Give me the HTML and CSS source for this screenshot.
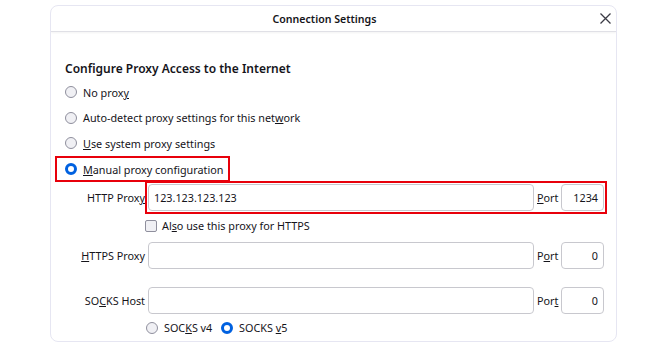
FILE: index.html
```html
<!DOCTYPE html>
<html lang="en">

<head>
    <meta charset="UTF-8">
    <title>Connection Settings</title>
    <link rel="stylesheet" href="styles.css">
</head>

<body>
    <div class="dialog">
        <div class="dialog-header">
            <span class="dialog-title">Connection Settings</span>
            <span class="close-btn">
                <svg width="11" height="11" viewBox="0 0 11 11">
                    <path d="M0.5 0.5 L10.5 10.5 M10.5 0.5 L0.5 10.5" stroke="#3b3b45" stroke-width="1.3" fill="none" />
                </svg>
            </span>
        </div>
        <div class="dialog-body">
            <h2>Configure Proxy Access to the Internet</h2>
            <div class="radio-row"><span class="radio"></span><span>No prox<u>y</u></span></div>
            <div class="radio-row"><span class="radio"></span><span>Auto-detect proxy settings for this net<u>w</u>ork</span></div>
            <div class="radio-row"><span class="radio"></span><span><u>U</u>se system proxy settings</span></div>
            <div class="radio-row highlight-row"><span class="radio checked"></span><span><u>M</u>anual proxy configuration</span></div>

            <div class="proxy-row first">
                <label class="proxy-label">HTTP Prox<u>y</u></label>
                <div class="proxy-fields highlight">
                    <div class="text-field host">123.123.123.123</div>
                    <span class="port-label"><u>P</u>ort</span>
                    <div class="text-field port">1234</div>
                </div>
            </div>
            <div class="check-row"><span class="checkbox"></span><span>Al<u>s</u>o use this proxy for HTTPS</span></div>

            <div class="proxy-row">
                <label class="proxy-label"><u>H</u>TTPS Proxy</label>
                <div class="proxy-fields">
                    <div class="text-field host"></div>
                    <span class="port-label">P<u>o</u>rt</span>
                    <div class="text-field port">0</div>
                </div>
            </div>

            <div class="proxy-row socks">
                <label class="proxy-label">SO<u>C</u>KS Host</label>
                <div class="proxy-fields">
                    <div class="text-field host"></div>
                    <span class="port-label">Por<u>t</u></span>
                    <div class="text-field port">0</div>
                </div>
            </div>
            <div class="socks-row">
                <span class="radio-row inline"><span class="radio"></span><span>SOC<u>K</u>S v4</span></span>
                <span class="radio-row inline"><span class="radio checked"></span><span>SOCKS <u>v</u>5</span></span>
            </div>
        </div>
    </div>
</body>

</html>
```

FILE: styles.css
```css
body {
    margin: 0;
    background-color: #fff;
    font-family: "Noto Sans", "Open Sans", sans-serif;
    font-size: 10.8px;
    color: #15141a;
}

.dialog {
    box-sizing: border-box;
    width: 567px;
    height: 337px;
    margin: 5px 0 0 50px;
    border: 1px solid #e6e6f2;
    border-radius: 8px;
    overflow: hidden;
}

.dialog-header {
    height: 25px;
    padding-right: 18px;
    border-bottom: 1px solid #e0e0e6;
    display: flex;
    align-items: center;
    justify-content: center;
    position: relative;
    box-shadow: 0 1px 2px rgba(0, 0, 0, 0.05);
}

.dialog-title {
    font-weight: 600;
    font-size: 10.6px;
}

.close-btn {
    position: absolute;
    right: 5px;
    top: 7px;
    display: flex;
}

.dialog-body {
    padding: 27px 0 0 14px;
}

h2 {
    margin: 0 0 0.5px;
    font-size: 12px;
    font-weight: 600;
    line-height: 20px;
}

.radio-row {
    display: flex;
    align-items: center;
    height: 25.5px;
}

.radio-row.inline {
    display: inline-flex;
    height: auto;
    margin-right: 6px;
}

.radio {
    box-sizing: border-box;
    width: 12px;
    height: 12px;
    border: 1px solid #8f8f9d;
    border-radius: 50%;
    background-color: #f0f0f4;
    margin-right: 6px;
}

.radio.checked {
    border: 3.5px solid #0061e0;
    background-color: #fff;
}

.highlight-row {
    display: inline-flex;
    box-sizing: border-box;
    height: 26px;
    margin-left: -10px;
    padding: 0 5px 0 8px;
    border: 2px solid #e8000b;
}

.proxy-row {
    display: flex;
    align-items: center;
    margin-top: 2px;
}

.proxy-row.socks {
    margin-top: 18px;
}

.proxy-label {
    width: 80px;
    text-align: right;
    margin-right: 3px;
}

.proxy-fields {
    display: flex;
    align-items: center;
    gap: 3px;
}

.proxy-fields.highlight {
    outline: 2px solid #e8000b;
    outline-offset: 1px;
}

.text-field {
    box-sizing: border-box;
    height: 27px;
    border: 1px solid #c8c8ce;
    border-radius: 4px;
    display: flex;
    align-items: center;
    padding: 0 5px;
}

.text-field.host {
    width: 386px;
}

.text-field.port {
    width: 43px;
    justify-content: flex-end;
}

.port-label {
    width: 21px;
}

.check-row {
    display: flex;
    align-items: center;
    height: 29px;
    padding-left: 80px;
}

.checkbox {
    box-sizing: border-box;
    width: 12px;
    height: 12px;
    border: 1px solid #8f8f9d;
    border-radius: 2px;
    background-color: #f0f0f4;
    margin-right: 5px;
}

.socks-row {
    padding: 6px 0 0 81px;
}
```
